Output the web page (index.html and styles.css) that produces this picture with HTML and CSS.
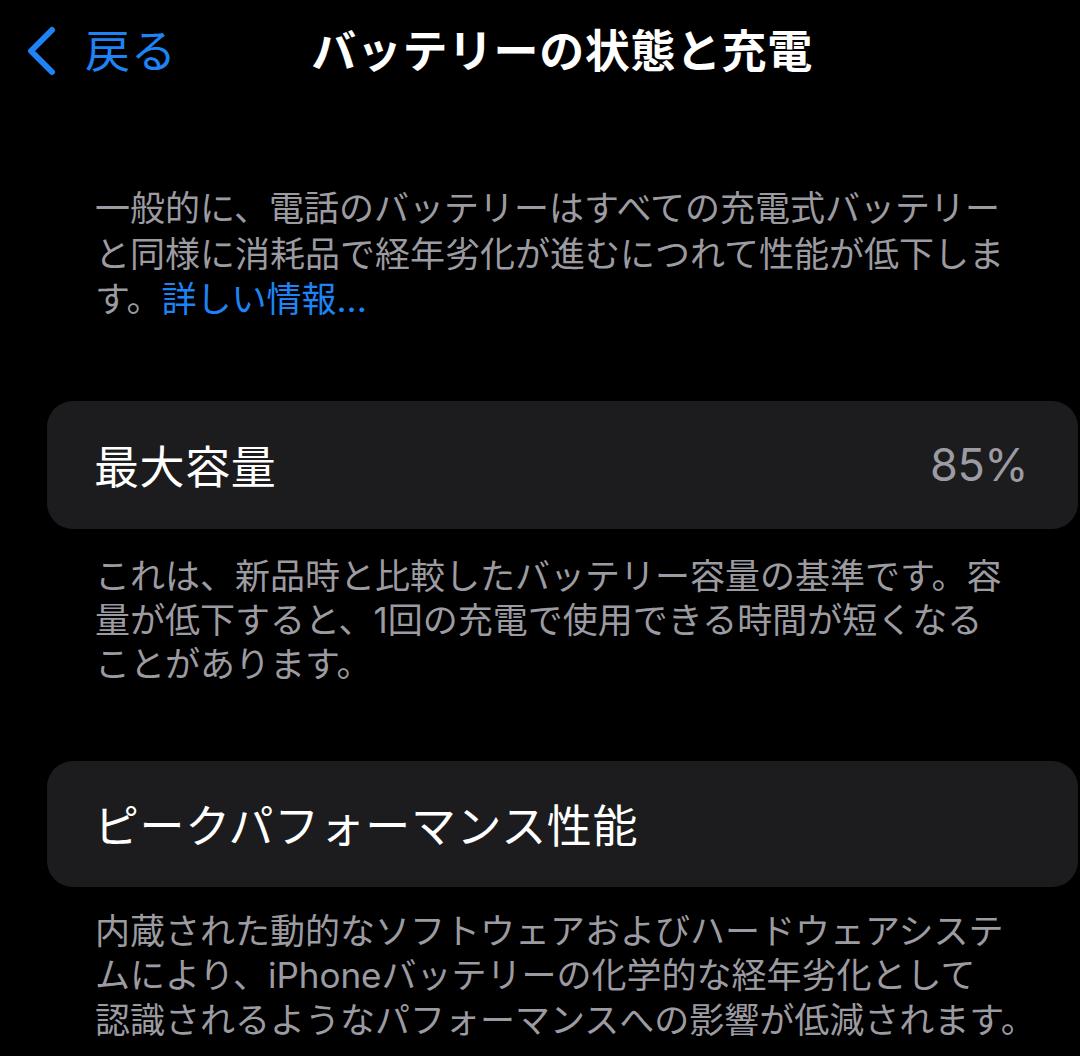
FILE: index.html
```html
<!DOCTYPE html>
<html lang="ja">
<head>
<meta charset="utf-8">
<title>バッテリーの状態と充電</title>
<link rel="stylesheet" href="styles.css">
</head>
<body>
<div class="screen">
  <header class="navbar">
    <a class="back" href="#">
      <svg class="chev" width="34" height="50" viewBox="0 0 34 50" aria-hidden="true">
        <path d="M28 4 L7 25 L28 46" fill="none" stroke="#1e84f5" stroke-width="6" stroke-linecap="round" stroke-linejoin="round"/>
      </svg>
      <span class="back-label">戻る</span>
    </a>
    <h1 class="title">バッテリーの状態と充電</h1>
    <div class="spacer"></div>
  </header>

  <p class="note intro">一般的に、電話のバッテリーはすべての充電式バッテリー<br>と同様に消耗品で経年劣化が進むにつれて性能が低下しま<br>す。<a class="link" href="#">詳しい情報...</a></p>

  <section class="card card-capacity">
    <span class="card-label">最大容量</span>
    <span class="card-value">85%</span>
  </section>

  <p class="note note-capacity">これは、新品時と比較したバッテリー容量の基準です。容<br>量が低下すると、1回の充電で使用できる時間が短くなる<br>ことがあります。</p>

  <section class="card card-peak">
    <span class="card-label">ピークパフォーマンス性能</span>
  </section>

  <p class="note note-peak">内蔵された動的なソフトウェアおよびハードウェアシステ<br>ムにより、iPhoneバッテリーの化学的な経年劣化として<br>認識されるようなパフォーマンスへの影響が低減されます。</p>
</div>
</body>
</html>
```

FILE: styles.css
```css
html, body {
  margin: 0;
  padding: 0;
  background: #000;
}

body {
  font-family: "Inter", "Noto Sans CJK JP", "Noto Sans", sans-serif;
  color: #fff;
  overflow: hidden;
}

.screen {
  width: 1080px;
  height: 1056px;
  display: flex;
  flex-direction: column;
}

.navbar {
  height: 100px;
  display: grid;
  grid-template-columns: 1fr auto 1fr;
  align-items: center;
}

.back {
  display: flex;
  align-items: center;
  gap: 27px;
  padding-left: 24px;
  text-decoration: none;
  color: #1e84f5;
}

.chev {
  display: block;
  margin-top: 2px;
}

.back-label {
  font-family: "Noto Sans CJK JP", sans-serif;
  font-size: 45px;
  line-height: 1;
  margin-top: -4px;
  letter-spacing: 1px;
}

.title {
  margin: -4px 0 0 44px;
  font-family: "Noto Sans CJK JP", sans-serif;
  font-size: 45px;
  font-weight: 700;
  line-height: 1;
  white-space: nowrap;
  letter-spacing: 0.6px;
}

.note {
  margin: 0;
  padding: 0 20px 0 95px;
  font-size: 35px;
  line-height: 45px;
  color: #9b9ba1;
  white-space: nowrap;
}

.intro {
  margin-top: 86px;
  line-height: 45.5px;
}

.link {
  color: #1e84f5;
  text-decoration: none;
}

.card {
  margin: 0 2px 0 47px;
  background: #1c1c1e;
  border-radius: 26px;
  display: flex;
  align-items: center;
  justify-content: space-between;
  padding: 0 50px 0 47px;
}

.card-label {
  font-family: "Noto Sans CJK JP", sans-serif;
  font-size: 45px;
  color: #fff;
  line-height: 1;
  letter-spacing: 0.6px;
}

.card-value {
  font-size: 45px;
  color: #9b9ba1;
  line-height: 1;
  letter-spacing: -0.5px;
}

.card-capacity {
  margin-top: 78px;
  height: 128px;
}

.note-capacity {
  margin-top: 25px;
  line-height: 44px;
}

.card-peak {
  margin-top: 75px;
  height: 126px;
}

.note-peak {
  margin-top: 22px;
  line-height: 44.5px;
}
```
